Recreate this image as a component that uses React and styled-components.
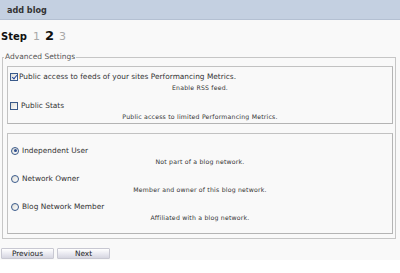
import React, { useState } from 'react';
import styled, { createGlobalStyle } from 'styled-components';

const GlobalStyle = createGlobalStyle`
    html, body {
        margin: 0;
        padding: 0;
        background: #ffffff;
    }
    body {
        font-family: "DejaVu Sans", Verdana, sans-serif;
        color: #222;
    }
`;

const Page = styled.div`
    width: 400px;
    background: #f9f9f9;
    padding-bottom: 1px;
`;

const Header = styled.div`
    height: 19px;
    display: flex;
    align-items: center;
    padding-left: 7px;
    background: #c4d0e1;
    border-bottom: 1px solid #b4c0d2;
`;

const Title = styled.h1`
    margin: 0;
    font-family: "DejaVu Sans Condensed", "DejaVu Sans", sans-serif;
    font-size: 9px;
    font-weight: bold;
    color: #333;
`;

const StepRow = styled.div`
    display: flex;
    align-items: baseline;
    height: 16px;
    margin: 8px 0 8px 1px;
`;

const StepLabel = styled.span`
    font-size: 10px;
    font-weight: bold;
    color: #111;
`;

const StepNumber = styled.span`
    margin-left: ${p => p.gap}px;
    font-size: ${p => (p.current ? 13 : 11)}px;
    font-weight: ${p => (p.current ? 'bold' : 'normal')};
    color: ${p => (p.current ? '#111' : '#a8a8a8')};
`;

const Fieldset = styled.fieldset`
    margin: 0 4px 0 2px;
    padding: 4px 2px 4px 4px;
    min-width: 0;
    border: 1px solid #c6c6c6;
`;

const Legend = styled.legend`
    padding: 0 1px;
    margin-left: -3px;
    font-size: 7.5px;
    line-height: 10px;
    color: #555;
`;

const Panel = styled.div`
    display: flex;
    flex-direction: column;
    gap: ${p => p.gap}px;
    padding: ${p => p.pad};
    border: 1px solid #c2c2c2;
    border-right-color: #b4b4b4;
    border-bottom-color: #b4b4b4;
    background: #f9f9f9;
    & + & {
        margin-top: 9px;
    }
`;

const Option = styled.div`
    display: flex;
    flex-direction: column;
`;

const OptionLine = styled.label`
    display: flex;
    align-items: center;
    height: 11px;
    padding-left: ${p => p.indent}px;
    font-size: 7.4px;
    color: #333;
`;

const Check = styled.input.attrs({ type: 'checkbox' })`
    appearance: none;
    box-sizing: border-box;
    width: 8px;
    height: 8px;
    margin: 0 ${p => p.space}px 0 0;
    border: 1px solid #3a5a8a;
    background: linear-gradient(135deg, #dcdcd6, #ffffff);
    position: relative;

    &:checked::after {
        content: '';
        position: absolute;
        left: 1.5px;
        top: 0px;
        width: 2px;
        height: 4px;
        border: solid #2a4a9a;
        border-width: 0 1.2px 1.2px 0;
        transform: rotate(40deg);
    }
`;

const Radio = styled.input.attrs({ type: 'radio' })`
    appearance: none;
    box-sizing: border-box;
    width: 8px;
    height: 8px;
    margin: 0 3px 0 0;
    border: 1px solid #3a5a8a;
    border-radius: 50%;
    background: linear-gradient(135deg, #dcdcd6, #ffffff);
    position: relative;

    &:checked::after {
        content: '';
        position: absolute;
        left: 1.5px;
        top: 1.5px;
        width: 3px;
        height: 3px;
        border-radius: 50%;
        background: #2f4f8f;
    }
`;

const Description = styled.div`
    height: 11px;
    line-height: 11px;
    text-align: center;
    font-size: 6.2px;
    letter-spacing: 0.2px;
    color: #333;
`;

const ButtonRow = styled.div`
    display: flex;
    gap: 3px;
    margin: 9px 0 0 1px;
`;

const Button = styled.button`
    width: 53px;
    height: 11px;
    padding: 0;
    font-family: "DejaVu Sans", Verdana, sans-serif;
    font-size: 7.4px;
    line-height: 9px;
    color: #222;
    background: linear-gradient(#ffffff, #e6e6ee 60%, #d6d6e0);
    border: 1px solid #c8c8d2;
    border-radius: 1px;
    cursor: pointer;
`;

const feedOptions = [
    {
        id: 'feeds',
        label: 'Public access to feeds of your sites Performancing Metrics.',
        desc: 'Enable RSS feed.',
        space: 1,
    },
    {
        id: 'stats',
        label: 'Public Stats',
        desc: 'Public access to limited Performancing Metrics.',
        space: 3,
    },
];

const userTypes = [
    { id: 'independent', label: 'Independent User', desc: 'Not part of a blog network.' },
    { id: 'owner', label: 'Network Owner', desc: 'Member and owner of this blog network.' },
    { id: 'member', label: 'Blog Network Member', desc: 'Affiliated with a blog network.' },
];

export default function App() {
    const [flags, setFlags] = useState({ feeds: true, stats: false });
    const [userType, setUserType] = useState('independent');

    return (
        <Page>
            <GlobalStyle />
            <Header>
                <Title>add blog</Title>
            </Header>

            <StepRow>
                <StepLabel>Step</StepLabel>
                <StepNumber gap={6}>1</StepNumber>
                <StepNumber gap={5} current>2</StepNumber>
                <StepNumber gap={5}>3</StepNumber>
            </StepRow>

            <Fieldset>
                <Legend>Advanced Settings</Legend>

                <Panel gap={7} pad="4px 0 1px 0">
                    {feedOptions.map(opt => (
                        <Option key={opt.id}>
                            <OptionLine indent={2}>
                                <Check
                                    space={opt.space}
                                    checked={flags[opt.id]}
                                    onChange={e => setFlags({ ...flags, [opt.id]: e.target.checked })}
                                />
                                {opt.label}
                            </OptionLine>
                            <Description>{opt.desc}</Description>
                        </Option>
                    ))}
                </Panel>

                <Panel gap={6} pad="11px 0 10px 0">
                    {userTypes.map(type => (
                        <Option key={type.id}>
                            <OptionLine indent={3}>
                                <Radio
                                    name="userType"
                                    checked={userType === type.id}
                                    onChange={() => setUserType(type.id)}
                                />
                                {type.label}
                            </OptionLine>
                            <Description>{type.desc}</Description>
                        </Option>
                    ))}
                </Panel>
            </Fieldset>

            <ButtonRow>
                <Button type="button">Previous</Button>
                <Button type="button">Next</Button>
            </ButtonRow>
        </Page>
    );
}
